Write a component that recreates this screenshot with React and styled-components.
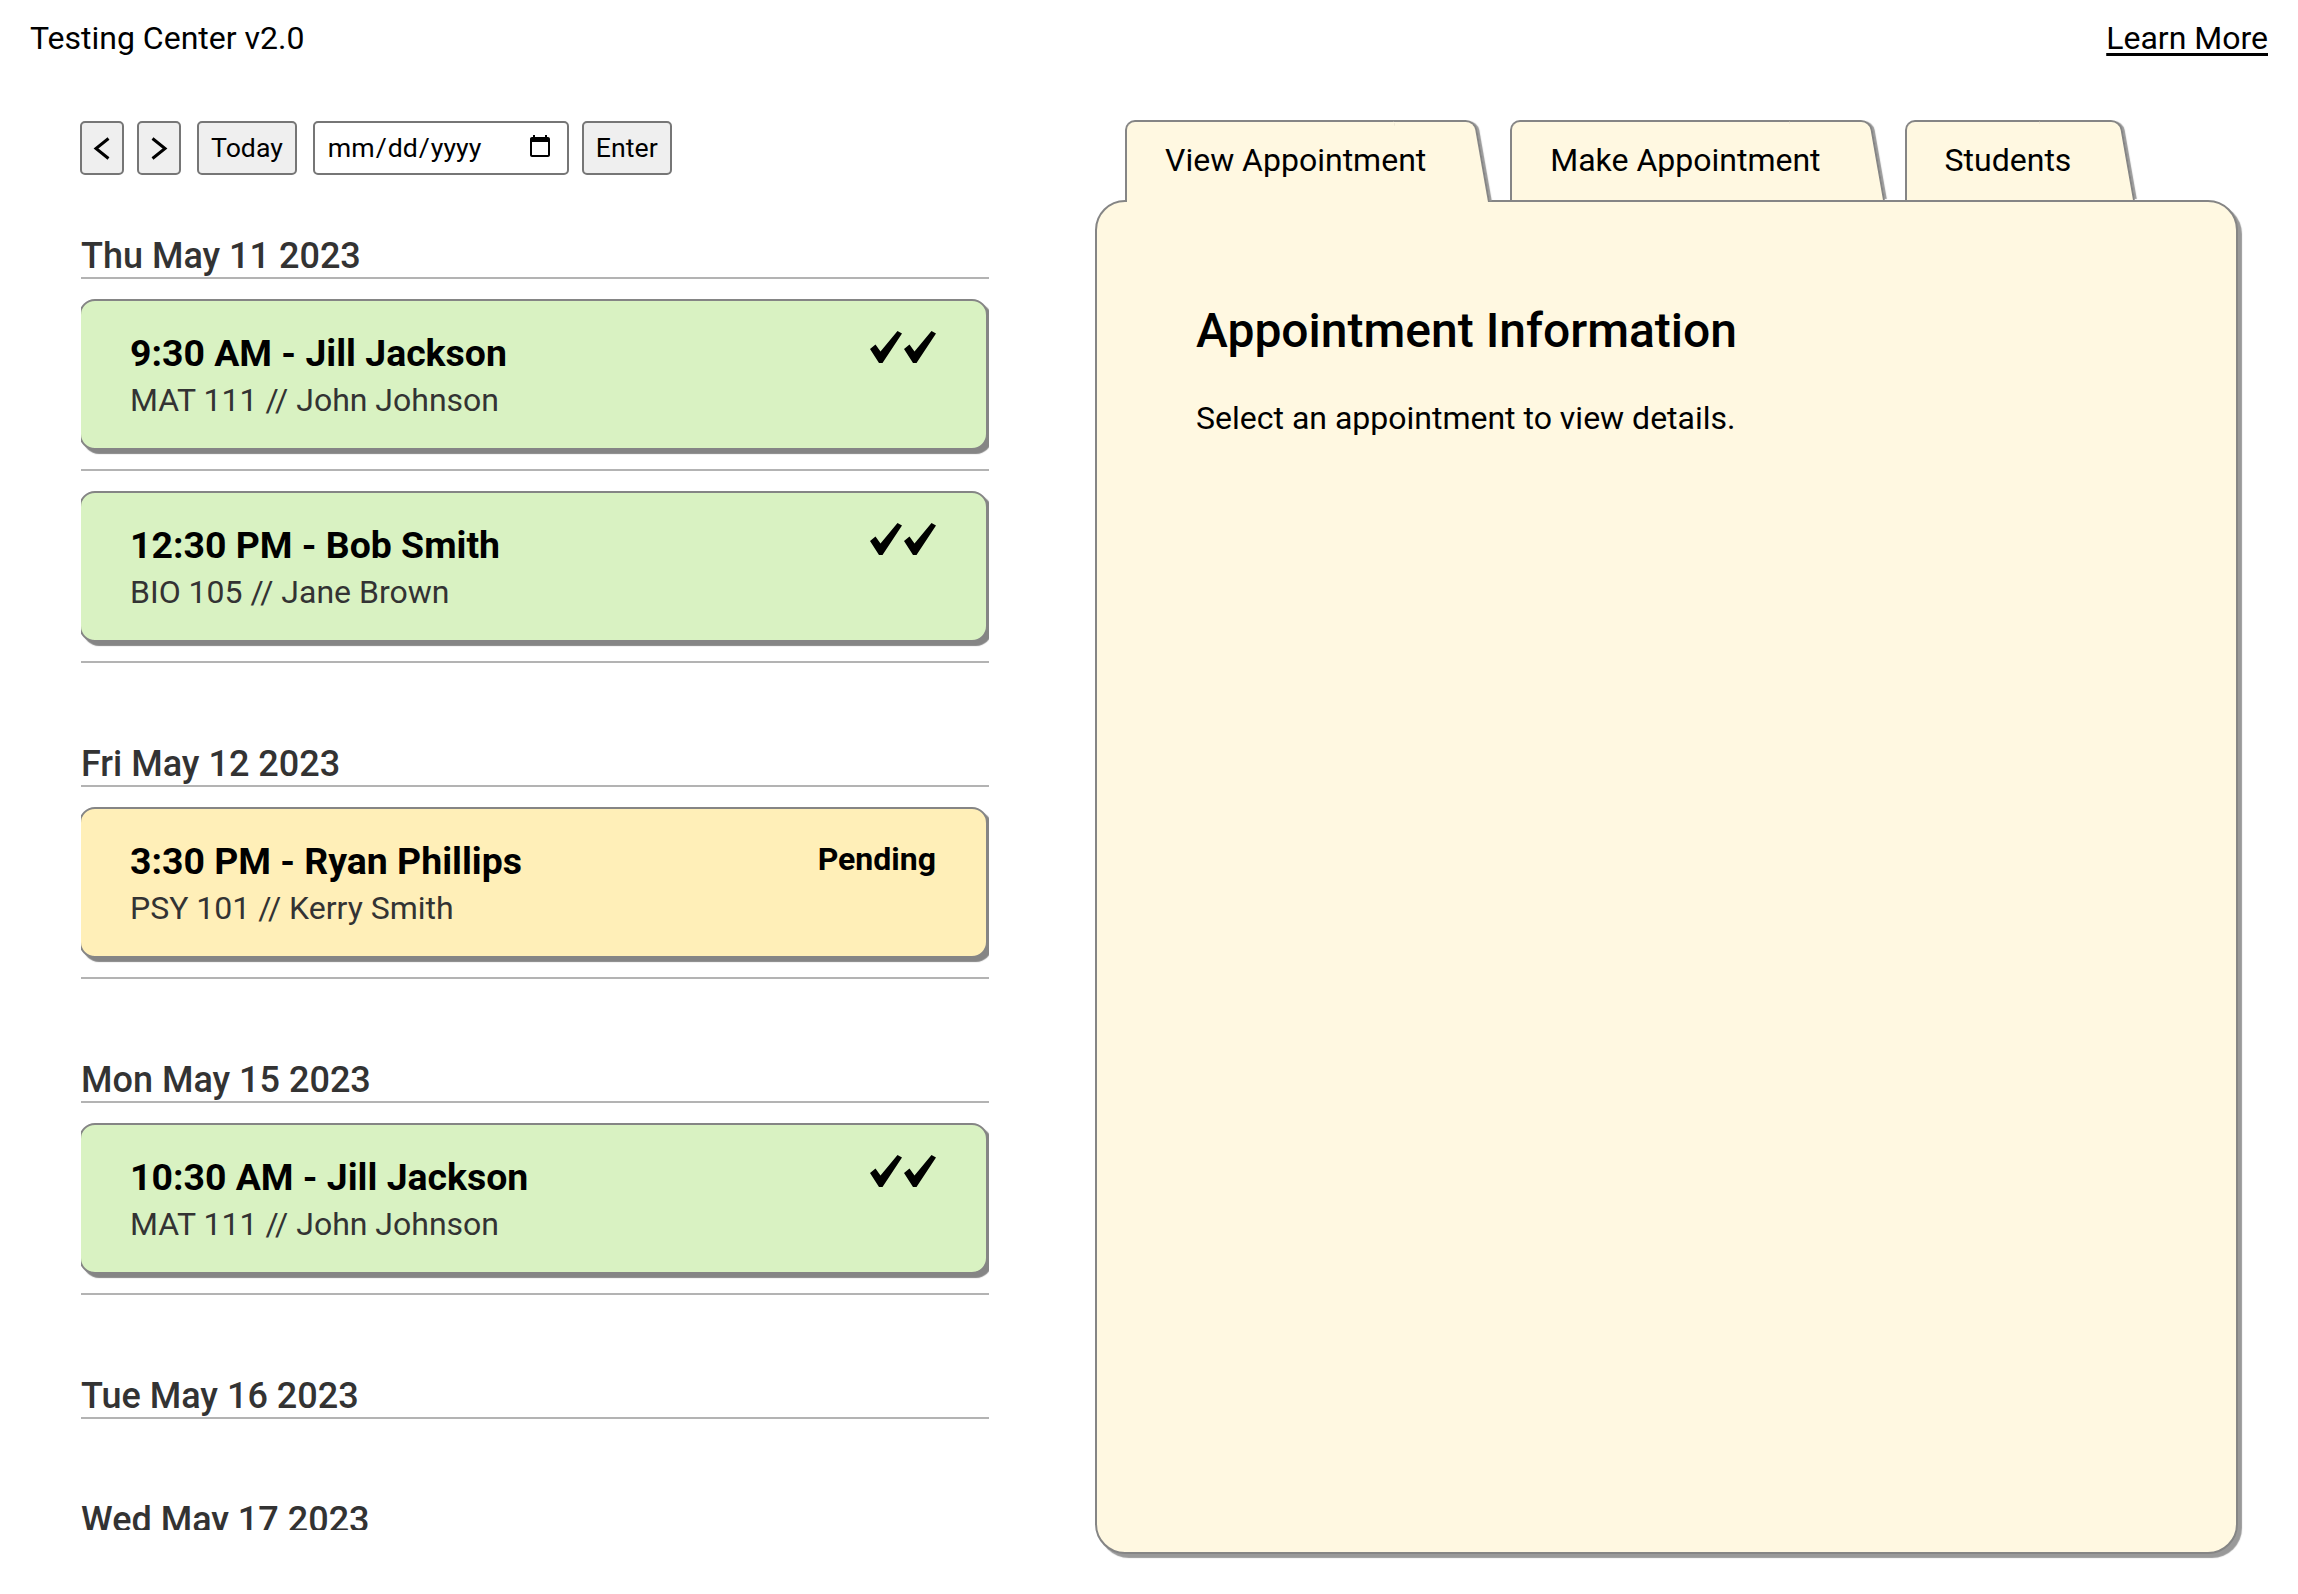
import { useState } from 'react';
import styled, { createGlobalStyle } from 'styled-components';

const GlobalStyle = createGlobalStyle`
  html, body {
    margin: 0;
    padding: 0;
    background: #ffffff;
    font-family: Roboto, "Liberation Sans", sans-serif;
    color: #000;
  }
  * {
    box-sizing: border-box;
  }
`;

const days = [
  {
    label: 'Thu May 11 2023',
    appts: [
      { time: '9:30 AM', student: 'Jill Jackson', course: 'MAT 111', proctor: 'John Johnson', status: 'approved' },
      { time: '12:30 PM', student: 'Bob Smith', course: 'BIO 105', proctor: 'Jane Brown', status: 'approved' },
    ],
  },
  {
    label: 'Fri May 12 2023',
    appts: [
      { time: '3:30 PM', student: 'Ryan Phillips', course: 'PSY 101', proctor: 'Kerry Smith', status: 'pending' },
    ],
  },
  {
    label: 'Mon May 15 2023',
    appts: [
      { time: '10:30 AM', student: 'Jill Jackson', course: 'MAT 111', proctor: 'John Johnson', status: 'approved' },
    ],
  },
  { label: 'Tue May 16 2023', appts: [] },
  { label: 'Wed May 17 2023', appts: [] },
  { label: 'Thu May 18 2023', appts: [] },
];

const tabs = ['View Appointment', 'Make Appointment', 'Students'];

// double check mark, drawn
const Check = () => (
  <svg width="32" height="32" viewBox="0 0 32 32">
    <path d="M0 18 L5.5 13.5 L10.5 20.5 L27.5 0 L32 2.5 L12.5 32 L9 32 Z" fill="#000" />
  </svg>
);

const Chevron = ({ dir }) => (
  <svg width="18" height="23" viewBox="0 0 18 23">
    <polyline
      points={dir === 'left' ? '15.5,1.5 3,11.5 15.5,21.5' : '2.5,1.5 15,11.5 2.5,21.5'}
      fill="none"
      stroke="#000"
      strokeWidth="3"
    />
  </svg>
);

const App = () => {
  const [active, setActive] = useState(0);

  return (
    <Page>
      <GlobalStyle />
      <Header>
        <Title>Testing Center v2.0</Title>
        <LearnMore href="#">Learn More</LearnMore>
      </Header>
      <Main>
        <Sidebar>
          <Toolbar>
            <NavButton aria-label="previous">
              <Chevron dir="left" />
            </NavButton>
            <NavButton aria-label="next">
              <Chevron dir="right" />
            </NavButton>
            <TextButton $spaced>Today</TextButton>
            <DateInput type="date" $spaced />
            <TextButton>Enter</TextButton>
          </Toolbar>
          <DayList>
            {days.map((day) => (
              <DayBlock key={day.label}>
                <DayHeading>{day.label}</DayHeading>
                {day.appts.map((a) => (
                  <ApptItem key={a.time + a.student}>
                    <Card $status={a.status}>
                      <CardTop>
                        <CardTitle>
                          {a.time} - {a.student}
                        </CardTitle>
                        {a.status === 'pending' ? (
                          <Status>Pending</Status>
                        ) : (
                          <Checks>
                            <Check />
                            <Check />
                          </Checks>
                        )}
                      </CardTop>
                      <CardSub>
                        {a.course} // {a.proctor}
                      </CardSub>
                    </Card>
                  </ApptItem>
                ))}
              </DayBlock>
            ))}
          </DayList>
        </Sidebar>
        <RightCol>
          <TabRow>
            {tabs.map((t, i) => (
              <Tab key={t} $active={i === active} onClick={() => setActive(i)}>
                {t}
              </Tab>
            ))}
          </TabRow>
          <Panel>
            <PanelTitle>Appointment Information</PanelTitle>
            <PanelText>Select an appointment to view details.</PanelText>
          </Panel>
        </RightCol>
      </Main>
    </Page>
  );
};

const Page = styled.div`
  width: 100%;
  height: 100vh;
  overflow: hidden;
`;

const Header = styled.header`
  display: flex;
  justify-content: space-between;
  align-items: flex-start;
  padding: 19px 30px 0 30px;
  height: 120px;
`;

const Title = styled.div`
  font-size: 32px;
  line-height: 38px;
`;

const LearnMore = styled.a`
  font-size: 32px;
  line-height: 38px;
  color: #000;
  text-decoration: underline;
  text-underline-offset: 4px;
`;

const Main = styled.div`
  display: grid;
  grid-template-columns: 908px 1fr;
  column-gap: 106px;
  padding: 0 60px 0 81px;
  height: 1434px;
`;

const Sidebar = styled.div`
  display: flex;
  flex-direction: column;
  min-height: 0;
`;

const Toolbar = styled.div`
  display: flex;
  align-items: center;
  gap: 13px;
  height: 55px;
  padding-top: 1px;
  margin-left: -1px;
`;

const baseControl = `
  height: 54px;
  border: 2px solid #767676;
  border-radius: 5px;
  font-family: Roboto, "Liberation Sans", sans-serif;
  font-size: 26.7px;
  color: #000;
`;

const NavButton = styled.button`
  ${baseControl}
  width: 44px;
  padding: 0;
  background: #efefef;
  display: flex;
  align-items: center;
  justify-content: center;
`;

const TextButton = styled.button`
  ${baseControl}
  background: #efefef;
  padding: 0 12px;
  margin-left: ${(p) => (p.$spaced ? '3px' : '0')};
`;

const DateInput = styled.input`
  ${baseControl}
  width: 256px;
  background: #fff;
  padding: 0 14px 0 12px;
  margin-left: ${(p) => (p.$spaced ? '3px' : '0')};
  &::-webkit-calendar-picker-indicator {
    width: 26px;
    height: 28px;
    margin-left: 8px;
    padding: 0;
    background-size: contain;
  }
`;

const DayList = styled.div`
  flex: 1;
  display: flex;
  flex-direction: column;
  gap: 80px;
  padding-top: 60px;
  margin-bottom: 24px;
  overflow: hidden;
`;

const DayBlock = styled.section`
  display: flex;
  flex-direction: column;
`;

const DayHeading = styled.h3`
  margin: 0;
  font-size: 36px;
  line-height: 42px;
  font-weight: 500;
  color: #333;
  border-bottom: 2px solid #b3b3b3;
`;

const ApptItem = styled.div`
  padding: 20px 0 19px;
  border-bottom: 2px solid #b3b3b3;
`;

const Card = styled.div`
  background: ${(p) => (p.$status === 'pending' ? '#ffefb8' : '#d9f2c2')};
  border: 2px solid #858585;
  border-radius: 16px;
  box-shadow: 4px 4px 1px #858585;
  padding: 30px 50px 29px 49px;
  margin: 0 1px 0 -2px;
`;

const CardTop = styled.div`
  display: flex;
  justify-content: space-between;
  align-items: flex-start;
`;

const CardTitle = styled.h3`
  margin: 0;
  font-size: 37.4px;
  line-height: 44px;
  font-weight: 700;
  color: #000;
`;

const Checks = styled.div`
  display: flex;
  gap: 2px;
`;

const Status = styled.div`
  font-size: 32px;
  line-height: 38px;
  font-weight: 700;
  margin-top: 1px;
`;

const CardSub = styled.div`
  margin-top: 6px;
  font-size: 32px;
  line-height: 38px;
  color: #333;
`;

const RightCol = styled.div`
  display: flex;
  flex-direction: column;
  min-height: 0;
`;

const TabRow = styled.div`
  display: flex;
  align-items: flex-end;
  gap: 20px;
  height: 80px;
  padding-left: 30px;
`;

const Tab = styled.div`
  position: relative;
  z-index: 2;
  display: flex;
  align-items: center;
  height: ${(p) => (p.$active ? '82px' : '80px')};
  margin-bottom: ${(p) => (p.$active ? '-2px' : '0')};
  padding: ${(p) => (p.$active ? '0 64px 2px 40px' : '0 64px 0 40px')};
  font-size: 32px;
  color: #000;
  cursor: pointer;

  &::before,
  &::after {
    content: '';
    position: absolute;
    top: 0;
    bottom: 0;
    z-index: -1;
    background: #fff8e1;
    border-top: 2px solid #858585;
  }
  &::before {
    left: 0;
    right: 50px;
    border-left: 2px solid #858585;
    border-top-left-radius: 10px;
  }
  &::after {
    right: 0;
    width: 80px;
    border-right: 2px solid #858585;
    border-top-right-radius: 10px;
    transform: skewX(10deg);
    transform-origin: bottom right;
    box-shadow: 3px 0 1px -1px #999;
  }
`;

const Panel = styled.div`
  flex: 1;
  background: #fff8e1;
  border: 2px solid #858585;
  border-radius: 30px;
  box-shadow: 4px 4px 1px #999;
  padding: 101px 99px;
`;

const PanelTitle = styled.h2`
  margin: 0;
  font-size: 48px;
  line-height: 56px;
  font-weight: 500;
`;

const PanelText = styled.p`
  margin: 40px 0 0;
  font-size: 32px;
  line-height: 38px;
`;

export default App;
